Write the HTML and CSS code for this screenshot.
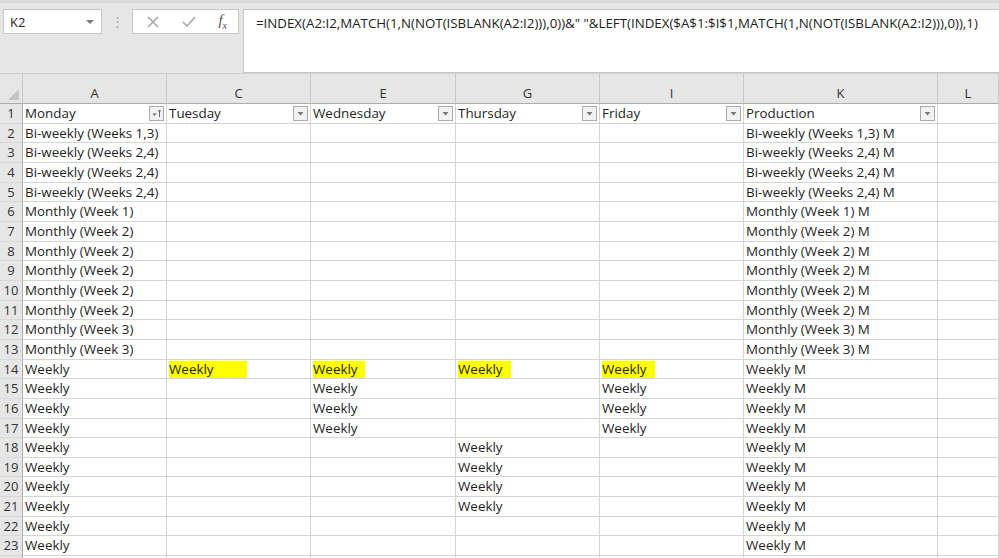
FILE: index.html
```html
<!DOCTYPE html>
<html lang="en">

<head>
  <meta charset="UTF-8">
  <title>Sheet</title>
  <link rel="stylesheet" href="styles.css">
</head>

<body>
  <div class="toolbar">
    <div class="name-box">
      <span>K2</span>
      <span class="caret"></span>
    </div>
    <div class="grip">&#8942;</div>
    <div class="func-box">
      <svg width="14" height="14" viewBox="0 0 14 14"><path d="M2 2 L12 12 M12 2 L2 12" stroke="#a8a8a8" stroke-width="1.6" fill="none"/></svg>
      <svg width="16" height="14" viewBox="0 0 16 14"><path d="M2 7 L6 11 L14 2" stroke="#a8a8a8" stroke-width="1.6" fill="none"/></svg>
      <span class="fx"><i>f</i><sub>x</sub></span>
    </div>
    <div class="formula-bar">=INDEX(A2:I2,MATCH(1,N(NOT(ISBLANK(A2:I2))),0))&amp;" "&amp;LEFT(INDEX($A$1:$I$1,MATCH(1,N(NOT(ISBLANK(A2:I2))),0)),1)</div>
  </div>

  <div class="sheet" id="sheet"></div>

  <script>
    let sheet = document.getElementById('sheet');
    let letters = ['A', 'C', 'E', 'G', 'I', 'K', 'L'];
    let headers = ['Monday', 'Tuesday', 'Wednesday', 'Thursday', 'Friday', 'Production', ''];

    let monday = [
      'Bi-weekly (Weeks 1,3)', 'Bi-weekly (Weeks 2,4)', 'Bi-weekly (Weeks 2,4)', 'Bi-weekly (Weeks 2,4)',
      'Monthly (Week 1)', 'Monthly (Week 2)', 'Monthly (Week 2)', 'Monthly (Week 2)', 'Monthly (Week 2)',
      'Monthly (Week 2)', 'Monthly (Week 3)', 'Monthly (Week 3)'
    ];
    while (monday.length < 22) monday.push('Weekly');

    // rows (1-based sheet row) that hold "Weekly" per column
    let weekly = {
      1: [14],
      2: [14, 15, 16, 17],
      3: [14, 18, 19, 20, 21],
      4: [14, 15, 16, 17]
    };
    let highlightWidth = { 1: 78, 2: 52, 3: 53, 4: 53 };

    function cell(cls, content) {
      let div = document.createElement('div');
      div.className = cls;
      if (content instanceof Node) div.appendChild(content);
      else div.textContent = content;
      sheet.appendChild(div);
      return div;
    }

    // column header row
    let corner = cell('corner', '');
    corner.innerHTML = '<svg width="11" height="11" viewBox="0 0 11 11"><path d="M11 0 L11 11 L0 11 Z" fill="#c4c4c4"/></svg>';
    letters.forEach(l => cell('col-head', l));

    // header row
    cell('row-head', '1');
    headers.forEach((h, i) => {
      let c = cell('cell head-cell', h);
      if (h) {
        let btn = document.createElement('span');
        btn.className = 'filter';
        btn.innerHTML = i === 0
          ? '<svg width="13" height="13" viewBox="0 0 13 13"><path d="M2.5 6.5 L6.5 6.5 L4.5 9 Z" fill="#666"/><path d="M9.5 3 L9.5 10 M8 4.5 L9.5 3 L11 4.5" stroke="#666" stroke-width="1" fill="none"/></svg>'
          : '<svg width="13" height="13" viewBox="0 0 13 13"><path d="M3.5 5 L9.5 5 L6.5 8.5 Z" fill="#777"/></svg>';
        c.appendChild(btn);
      }
    });

    for (let r = 2; r <= 24; r++) {
      // row 24 is only a sliver at the bottom edge
      cell('row-head', r <= 23 ? r : '');
      let m = monday[r - 2] || '';
      cell('cell', m);
      for (let col = 1; col <= 4; col++) {
        if (weekly[col].includes(r)) {
          if (r === 14) {
            let span = document.createElement('span');
            span.className = 'marker';
            span.style.width = highlightWidth[col] + 'px';
            span.textContent = 'Weekly';
            cell('cell', span);
          } else {
            cell('cell', 'Weekly');
          }
        } else {
          cell('cell', '');
        }
      }
      cell('cell', m ? m + ' M' : '');
      cell('cell', '');
    }
  </script>
</body>
</html>
```

FILE: styles.css
```css
html,
body {
  margin: 0;
  height: 558px;
  overflow: hidden;
  background: #ffffff;
  font-family: "Open Sans", "Noto Sans", sans-serif;
}

.toolbar {
  display: flex;
  align-items: flex-start;
  height: 74px;
  padding: 6px 0 0 3px;
  box-sizing: border-box;
  background: #e6e6e6;
  border-top: 3px solid #dadada;
  border-bottom: 1px solid #cfcfcf;
}

.name-box {
  display: flex;
  align-items: center;
  justify-content: space-between;
  width: 99px;
  height: 25px;
  box-sizing: border-box;
  padding: 0 7px 0 6px;
  background: #fff;
  border: 1px solid #c6c6c6;
  font-size: 13px;
  color: #222;
}

.caret {
  width: 0;
  height: 0;
  border-left: 4px solid transparent;
  border-right: 4px solid transparent;
  border-top: 4px solid #777;
}

.grip {
  width: 30px;
  text-align: center;
  color: #aaa;
  font-size: 13px;
  line-height: 25px;
}

.func-box {
  display: flex;
  align-items: center;
  justify-content: space-between;
  width: 107px;
  height: 25px;
  box-sizing: border-box;
  padding: 0 11px 0 13px;
  background: #fff;
  border: 1px solid #c6c6c6;
}

.fx {
  font-family: "Liberation Serif", serif;
  font-size: 15px;
  color: #555;
}

.fx sub {
  font-size: 10px;
  font-style: italic;
}

.formula-bar {
  flex: 1;
  height: 64px;
  margin-left: 4px;
  box-sizing: border-box;
  padding: 4px 0 0 12px;
  background: #fff;
  border: 1px solid #c6c6c6;
  border-right: none;
  font-size: 13.3px;
  color: #222;
  white-space: nowrap;
  overflow: hidden;
}

.sheet {
  display: grid;
  grid-template-columns: 23px 144px 144px 145px 144px 144px 194px 1fr;
  grid-template-rows: 30px;
  grid-auto-rows: 19.66px;
  font-size: 13.4px;
  color: #1e1e1e;
}

.corner,
.col-head,
.row-head {
  background: #e6e6e6;
  color: #333;
  box-sizing: border-box;
  border-right: 1px solid #c8c8c8;
  border-bottom: 1px solid #c8c8c8;
}

.corner {
  display: flex;
  align-items: flex-end;
  justify-content: flex-end;
  padding: 0 3px 3px 0;
  border-bottom: 1px solid #ababab;
}

.col-head {
  text-align: center;
  padding-top: 10px;
  font-size: 13px;
  border-bottom: 1px solid #ababab;
}

.row-head {
  text-align: center;
  font-size: 13px;
  line-height: 19px;
  border-right: 1px solid #ababab;
  border-bottom: 1px solid #d8d8d8;
}

.cell {
  position: relative;
  box-sizing: border-box;
  padding-left: 2px;
  line-height: 19px;
  white-space: nowrap;
  border-right: 1px solid #d4d4d4;
  border-bottom: 1px solid #d4d4d4;
}

.filter {
  position: absolute;
  right: 2px;
  top: 2px;
  width: 15px;
  height: 15px;
  box-sizing: border-box;
  display: flex;
  align-items: center;
  justify-content: center;
  border: 1px solid #ababab;
  background: #f2f2f2;
}

.marker {
  display: inline-block;
  background: #ffff00;
  line-height: 17px;
  margin-top: 1px;
}
```
